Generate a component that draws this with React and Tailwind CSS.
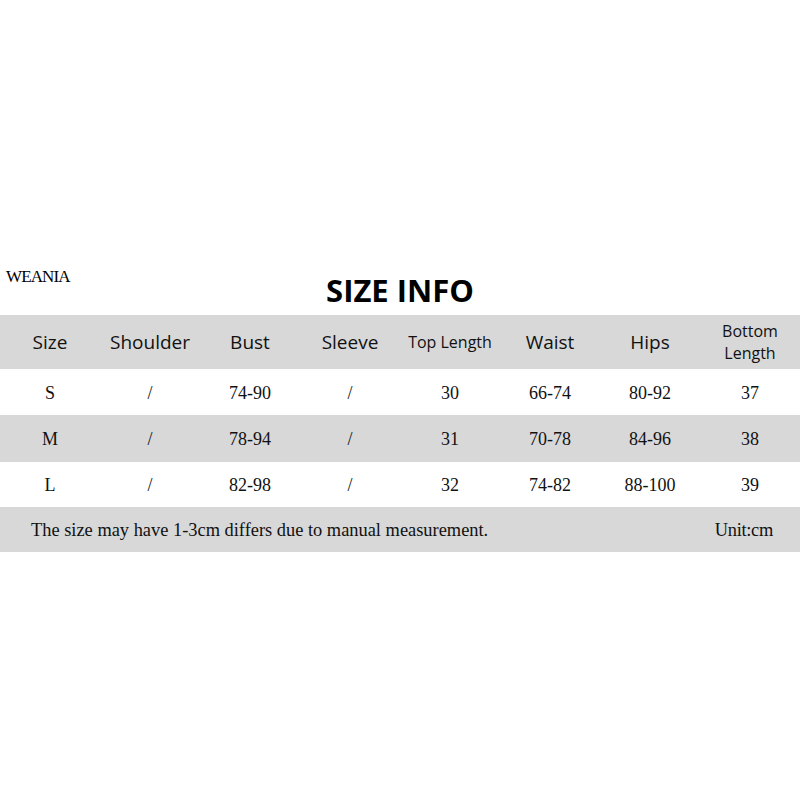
import React from "react";

const heads = ["Size", "Shoulder", "Bust", "Sleeve", "Top Length", "Waist", "Hips", "Bottom Length"];
const rows = [
  ["S", "/", "74-90", "/", "30", "66-74", "80-92", "37"],
  ["M", "/", "78-94", "/", "31", "70-78", "84-96", "38"],
  ["L", "/", "82-98", "/", "32", "74-82", "88-100", "39"],
];

export default function App() {
  return (
    <div className="w-[800px] h-[800px] bg-white text-[#111] flex flex-col">
      <div className="h-[262px]" />
      <div className="h-[53px] grid grid-cols-[1fr_auto_1fr]">
        <div
          className="pl-[6px] pt-[6px] text-[17px] leading-none font-medium tracking-[-0.9px] text-black"
          style={{ fontFamily: '"Liberation Serif", serif' }}
        >
          WEANIA
        </div>
        <div
          className="pt-[11px] text-[31px] leading-[34px] font-bold text-black"
          style={{ fontFamily: '"Open Sans", sans-serif' }}
        >
          SIZE INFO
        </div>
        <div />
      </div>
      <div
        className="h-[54px] bg-[#d8d8d8] grid grid-cols-8 items-center text-center"
        style={{ fontFamily: '"Open Sans", sans-serif' }}
      >
        {heads.map((h, i) => (
          <div
            key={h}
            className={
              i === 4
                ? "text-[16px] leading-[22px]"
                : i === 7
                ? "text-[16px] leading-[22px] px-[20px]"
                : "text-[19px] leading-[24px]"
            }
          >
            {h}
          </div>
        ))}
      </div>
      <div style={{ fontFamily: '"Liberation Serif", serif' }}>
        {rows.map((r, ri) => (
          <div
            key={ri}
            className={
              "grid grid-cols-8 items-center text-center text-[18px] pt-[2px] " +
              (ri === 1 ? "h-[47px] bg-[#d8d8d8]" : ri === 0 ? "h-[46px] bg-white" : "h-[45px] bg-white")
            }
          >
            {r.map((c, ci) => (
              <div key={ci}>{c}</div>
            ))}
          </div>
        ))}
        <div className="h-[45px] bg-[#d8d8d8] flex items-center justify-between pl-[31px] pr-[27px] pt-[2px] text-[18.4px]">
          <span>The size may have 1-3cm differs due to manual measurement.</span>
          <span className="tracking-[-0.3px]">Unit:cm</span>
        </div>
      </div>
    </div>
  );
}
